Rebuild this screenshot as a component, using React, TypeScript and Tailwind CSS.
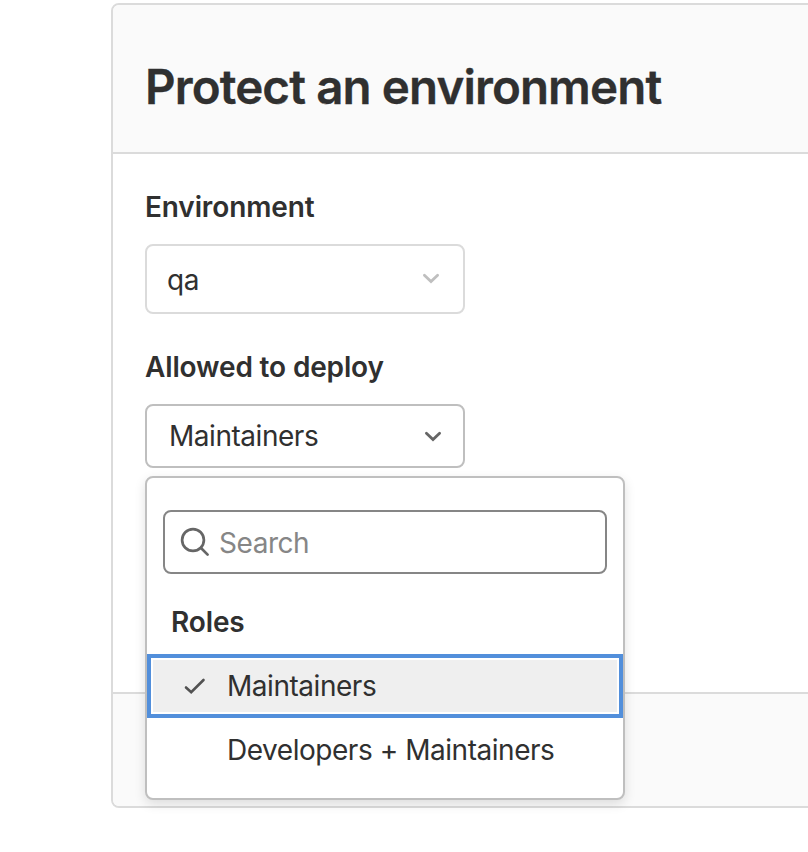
function Chevron({ className }: { className: string }) {
  return (
    <svg className={className} width="32" height="32" viewBox="0 0 32 32" fill="none" stroke="currentColor" strokeWidth="2.8" strokeLinecap="round" strokeLinejoin="miter">
      <path d="m9.4 13.2 6.6 6.4 6.6-6.4" />
    </svg>
  );
}

export default function App() {
  return (
    <div className="h-[852px] w-[808px] overflow-hidden bg-white pt-[3px] pl-[111px] font-['Inter','Liberation_Sans',sans-serif] text-[28px] leading-10 tracking-[-0.46px] text-[#303030]">
      <section className="flex h-[805px] w-[760px] flex-col rounded-lg border-2 border-[#dbdbdb] bg-white">
        <header className="flex h-[149px] shrink-0 items-center rounded-t-md border-b-2 border-[#dbdbdb] bg-[#fafafa] px-8 pt-4">
          <h2 className="text-[47.5px] leading-[60px] font-semibold whitespace-nowrap tracking-[-0.88px] [-webkit-text-stroke:0.3px_#303030]">Protect an environment</h2>
        </header>
        <div className="grow px-8 pt-[33px]">
          <div className="font-semibold tracking-[-0.13px]">Environment</div>
          <div className="mt-[17px] flex h-[70px] w-80 items-center justify-between rounded-lg border-2 border-[#dbdbdb] pr-4 pl-5">
            <span className="pt-px">qa</span>
            <Chevron className="mb-0.5 text-[#bfbfbf]" />
          </div>
          <div className="mt-[33px] font-semibold tracking-[-0.15px]">Allowed to deploy</div>
          <div className="relative mt-[17px]">
            <button className="flex h-16 w-80 items-center justify-between rounded-lg border-2 border-[#bfbfbf] pr-[14px] pl-[22px]">
              <span>Maintainers</span>
              <Chevron className="text-[#666666]" />
            </button>
            <div className="absolute top-[72px] left-0 h-[324px] w-[480px] rounded-lg border-2 border-[#bfbfbf] bg-white pt-8 shadow-[0_4px_12px_rgba(0,0,0,0.12)]">
              <div className="mx-4 flex h-16 items-center rounded-lg border-2 border-[#868686] pl-[14px] text-[#868686]">
                <svg className="mr-2 text-[#666666]" width="32" height="32" viewBox="0 0 32 32" fill="none" stroke="currentColor" strokeWidth="2.7" strokeLinecap="round">
                  <circle cx="14" cy="14" r="10.9" />
                  <path d="m22 22 6.6 6.6" />
                </svg>
                <span className="pt-0.5">Search</span>
              </div>
              <div className="mt-7 px-6 font-semibold tracking-[-0.13px]">Roles</div>
              <div className="mt-3 h-16 border-4 border-[#528fdb] bg-white p-0.5">
                <div className="flex h-full items-center bg-[#efefef] pl-[26px]">
                  <svg className="mr-[16px] shrink-0 text-[#525252]" width="32" height="32" viewBox="0 0 32 32" fill="none" stroke="currentColor" strokeWidth="2.6" strokeLinecap="round">
                    <path d="m7 17.5 5.2 4.7L24.5 10" />
                  </svg>
                  <span>Maintainers</span>
                </div>
              </div>
              <div className="flex h-16 items-center pl-20 whitespace-nowrap">Developers + Maintainers</div>
            </div>
          </div>
        </div>
        <footer className="h-[114px] shrink-0 rounded-b-md border-t-2 border-[#dbdbdb] bg-[#fafafa]" />
      </section>
    </div>
  );
}
